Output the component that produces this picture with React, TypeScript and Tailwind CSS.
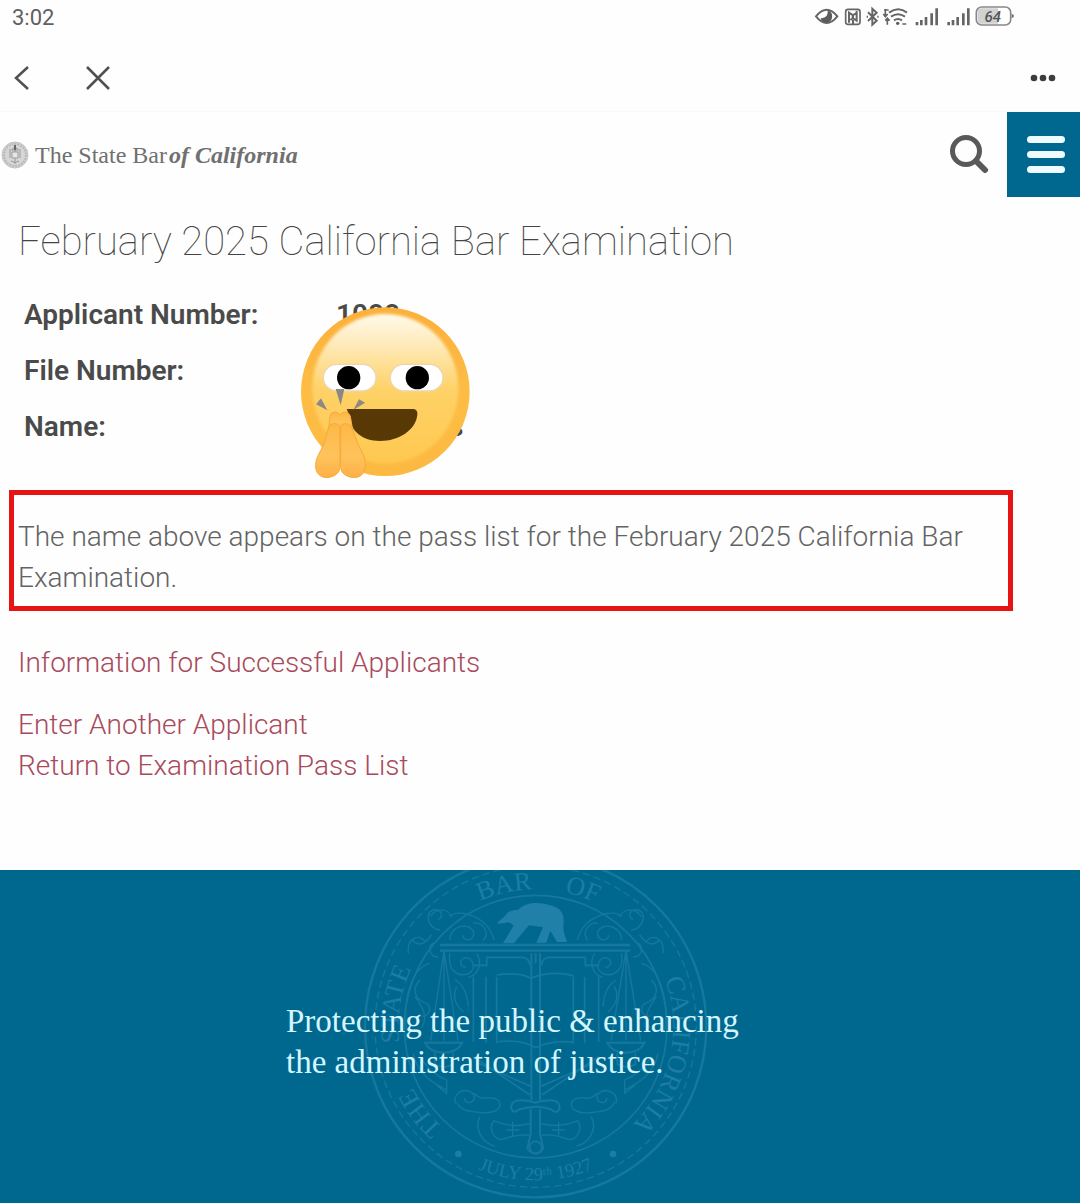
import React from "react";

const details = [
  { label: "Applicant Number:", value: "1088", className: "" },
  { label: "File Number:", value: "", className: "" },
  { label: "Name:", value: "s", className: "pl-[113px]" },
];

function StatusIcons() {
  return (
    <svg viewBox="102 12 603 78" className="w-[201px] h-[26px]" fill="none" stroke="#666" strokeWidth="6">
      {/* eye comfort */}
      <path d="M108 49q32-40 64 0q-32 40-64 0z" />
      <path d="M143 31a19 19 0 0 1-3 37c-12 0-17-6-18-13c12 0 23-6 21-24z" fill="#5c5c5c" stroke="none" />
      {/* nfc */}
      <rect x="197" y="28" width="43" height="45" rx="7" strokeWidth="5" />
      <path d="M207 68V38l12 8v8l-8 6M230 32v30l-12-8v-8l10-6M219 60v12" strokeWidth="6" />
      {/* bluetooth */}
      <path d="M264 37l26 25-13 12V26l13 12-26 25" strokeWidth="6" />
      <path d="M260 50h4M292 50h4" />
      {/* wifi */}
      <path d="M327 38q28-20 54 0M333 50q21-14 42 0M342 61q12-8 24 0" />
      <circle cx="353" cy="70" r="5" fill="#5c5c5c" stroke="none" />
      <path d="M312 30h14M316 27v20M310 42l6 8 7-8M322 74V56M316 62l6-7 7 7M367 72h12" strokeWidth="5" />
      {/* signal bars */}
      <path d="M411 76v-10M424 76V60M438 76V51M455 76V40M470 76V25" strokeWidth="8" />
      <path d="M506 76v-10M519 76V60M533 76V51M550 76V40M565 76V25" strokeWidth="8" />
      {/* battery */}
      <rect x="589" y="21" width="103" height="54" rx="16" strokeWidth="5" stroke="#888" fill="#fff" />
      <path d="M604 25h50v46h-50q-11 0-11-12V37q0-12 11-12z" fill="#d2d2d2" stroke="none" />
      <path d="M695 42q7 0 7 6t-7 6z" fill="#777" stroke="none" />
      <text x="638" y="65" textAnchor="middle" fontSize="45" fontWeight="500" fontStyle="italic" fontFamily="Roboto, sans-serif" fill="#555" stroke="none">
        64
      </text>
    </svg>
  );
}

function SmallSeal() {
  return (
    <svg viewBox="0 0 28 28" className="w-7 h-7" fill="none" stroke="#999">
      <circle cx="14" cy="14" r="13" fill="#d6d6d6" stroke="#c4c4c4" />
      <circle cx="14" cy="14" r="11" strokeDasharray="2 1" strokeWidth="2" stroke="#b8b8b8" />
      <path d="M14 5v18M8 9h12M9 10v7M19 10v7M10 20q4 3 8 0M11 8q3-3 6 0" />
      <path d="M11 11h6v6h-6z" fill="#e6e6e6" />
      <path d="M14 4v5" strokeWidth="2" stroke="#666" />
    </svg>
  );
}

function Emoji() {
  return (
    <svg viewBox="0 0 630 600" className="w-[210px] h-[200px]">
      <defs>
        <linearGradient id="face" x1="0" y1="0" x2="0" y2="1">
          <stop offset="0" stopColor="#fbb03a" />
          <stop offset="0.5" stopColor="#fdbd45" />
          <stop offset="1" stopColor="#fcb941" />
        </linearGradient>
        <linearGradient id="shine" x1="0" y1="0" x2="0" y2="1">
          <stop offset="0" stopColor="#fffae9" />
          <stop offset="0.2" stopColor="#feeabb" />
          <stop offset="0.5" stopColor="#fed268" />
          <stop offset="1" stopColor="#fec84f" />
        </linearGradient>
        <linearGradient id="hand" x1="0" y1="0" x2="0" y2="1">
          <stop offset="0" stopColor="#fdb844" />
          <stop offset="0.6" stopColor="#ffc35c" />
          <stop offset="1" stopColor="#fdb045" />
        </linearGradient>
        <filter id="soft" x="-10%" y="-10%" width="120%" height="120%">
          <feGaussianBlur stdDeviation="5" />
        </filter>
      </defs>
      <circle cx="316" cy="305" r="253" fill="url(#face)" />
      <ellipse cx="316" cy="296" rx="219" ry="224" fill="url(#shine)" filter="url(#soft)" />
      <rect x="130" y="223" width="158" height="80" rx="40" fill="#fff" stroke="#eed5ae" strokeWidth="4" />
      <rect x="331" y="223" width="158" height="80" rx="40" fill="#fff" stroke="#eed5ae" strokeWidth="4" />
      <circle cx="206" cy="263" r="35" />
      <circle cx="412" cy="263" r="35" />
      <path d="M200 357H400q14 2 12 18c-5 45-55 78-112 78c-52 0-92-30-88-74q-8-10-12-22z" fill="#583906" />
      <path d="M167 297h26l-11 49zM108 343l15-18 19 36zM255 338l-18-10-17 32z" fill="#8c8984" />
      <g fill="url(#hand)" stroke="#f5a93a" strokeWidth="3" strokeLinejoin="round">
        <path d="M146 420L150 380Q152 367 164 366Q176 366 180 376Q186 364 198 366Q210 369 212 384L218 420Z" />
        <path d="M180 410C172 396 150 398 145 414C137 440 136 458 124 478C112 500 106 512 107 530C108 556 130 567 152 561C172 555 179 545 180 530Z" />
        <path d="M182 410C190 396 209 399 216 414C226 436 230 458 242 478C252 497 257 512 256 530C254 556 234 567 210 561C190 555 183 545 182 530Z" />
      </g>
    </svg>
  );
}

function FooterSeal() {
  return (
    <svg viewBox="15 30 1170 999" className="w-[390px] h-[333px]" fill="none" stroke="#17789e" strokeWidth="5">
      <defs>
        <path id="ring" d="M587 912A412 412 0 1 1 588 912" />
        <path id="ringBottom" d="M287 850A461 461 0 0 0 887 850" />
      </defs>
      <circle cx="587" cy="500" r="512" strokeWidth="7" />
      <circle cx="587" cy="500" r="482" strokeDasharray="22 12" strokeWidth="4" />
      <circle cx="587" cy="500" r="394" />
      <g fill="#1d7da3" stroke="none" fontSize="78" textAnchor="middle" fontFamily="'Liberation Serif', serif">
        <text>
          <textPath href="#ring" startOffset="382">THE</textPath>
        </text>
        <text>
          <textPath href="#ring" startOffset="712">STATE</textPath>
        </text>
        <text>
          <textPath href="#ring" startOffset="1202">BAR</textPath>
        </text>
        <text>
          <textPath href="#ring" startOffset="1430">OF</textPath>
        </text>
        <text>
          <textPath href="#ring" startOffset="2031">CALIFORNIA</textPath>
        </text>
        <text fontSize="56">
          <textPath href="#ringBottom" startOffset="50%">JULY 29ᵗʰ 1927</textPath>
        </text>
        <circle cx="355" cy="882" r="10" />
        <circle cx="819" cy="882" r="10" />
      </g>
      {/* bear */}
      <path
        d="M470 190l25-22c8-14 24-20 38-18c28-26 68-24 96-14c32 6 44 24 42 52c-4 26 4 38 10 58h-30l-20-34-12 36h-30l20-46-42-6-46 54h-32l32-54-16-10q-18 6-35 4z"
        fill="#2080a7"
        stroke="none"
      />
      {/* scales beam and columns */}
      <path d="M300 255H870M300 272H870" strokeWidth="7" />
      <path d="M440 292h104q24 0 26 24M736 292H630q-24 0-26 24M440 292v24h-40M736 292v24h40M400 350v196M438 350v200M470 350v200M776 350v196M734 350v200M700 350v200" />
      <path d="M470 345q70-10 102 10q60-25 128-8M475 545q70-8 112 18q50-24 115-16M415 610l160 70M760 610l-160 70M400 590l170 115M776 590l-170 115" />
      <path d="M574 280v440M600 280v440M587 280v30" strokeWidth="6" />
      <path d="M312 272l-40 270M312 272l42 270M312 272v270M858 272l-45 270M858 272l44 270M858 272v270" strokeWidth="4" />
      <path d="M255 548h112q-14 30-56 30t-56-30zM802 548h112q-14 30-56 30t-56-30z" strokeWidth="6" />
      <path d="M285 578v34q30 18 54 0v-34M832 578v34q30 18 54 0v-34" />
      {/* scrollwork */}
      {["", "translate(1174 0) scale(-1 1)"].map((t) => (
        <g key={t} transform={t || undefined} strokeWidth="4">
          <path d="M300 210c-34-4-50-50-20-60c24-6 34 24 14 28M270 170c20-30 60-22 62 0c10-24 110-10 130 70M330 240c-4-40 56-56 70-26c8 28-30 34-32 12M400 190c30-6 50 30 30 52" />
          <path d="M330 280c-10 50 24 74 56 60c26-16 12-52-14-46c-18 8-8 32 6 26M410 280c16 24 10 62-24 72M205 280c-6-44 30-60 50-36M215 240q30 30 60-16M285 250c-24-2-20 46 10 40" />
          <path d="M270 310c-50 10-84 100-70 200M240 360c-30 30-10 60 18 70c20 12 10 40-14 38M225 410c24 34 40 60 20 94M345 360q36 20 40 80M350 380q-20 40 20 76M220 580c10 60 60 90 100 110M240 590q30 50 80 70v40l-30-24" />
          <path d="M346 730c-10-40 44-50 56-24c8 24-30 30-28 8M402 700c30 30 50 0 74 22c16 26-20 40-50 36c-40-4-60-4-76-30M420 770c-20 40 10 80 44 88M460 782q60 24 110 8M462 782c-20 26 4 60 26 56q50-18 80-12M500 810h38M518 786v42" />
        </g>
      ))}
      {/* sword hilt */}
      <path d="M514 748c-6-34 34-30 72-20c40-10 78-14 72 20q-10 16-24 0q-40-16-96 0q-16 14-24 0zM572 748v74l-10 44q24 30 48 0l-10-44v-74" strokeWidth="6" />
      <circle cx="587" cy="862" r="18" />
    </svg>
  );
}

export default function App() {
  return (
    <div className="min-h-screen flex flex-col bg-[#fefefe] font-[Roboto,sans-serif] text-[#4a4a4a]">
      <div className="flex items-center justify-between h-[34px] pl-3 pr-[65px]">
        <span className="text-[22px] text-[#606060]">3:02</span>
        <StatusIcons />
      </div>

      <nav className="flex items-center justify-between h-[78px] pt-2.5 pl-2.5 pr-6 border-b border-[#f8f8f8]">
        <div className="flex gap-12">
          <button aria-label="Back">
            <svg viewBox="0 0 26 32" className="w-[26px] h-8" fill="none" stroke="#505050" strokeWidth="2.5">
              <path d="M18 5L6 16L18 27" />
            </svg>
          </button>
          <button aria-label="Close">
            <svg viewBox="0 0 28 32" className="w-7 h-8" fill="none" stroke="#505050" strokeWidth="2.5">
              <path d="M3 5L25 27M25 5L3 27" />
            </svg>
          </button>
        </div>
        <button aria-label="More">
          <svg viewBox="0 0 26 26" className="w-[26px] h-[26px]" fill="#3c3c3c">
            <circle cx="4" cy="13" r="3.300" />
            <circle cx="13" cy="13" r="3.300" />
            <circle cx="22" cy="13" r="3.300" />
          </svg>
        </button>
      </nav>

      <header className="flex items-center justify-between h-[85px]">
        <a href="#" className="flex items-center gap-1.5 pl-px font-['Liberation_Serif',serif] text-2xl text-[#707070]">
          <SmallSeal />
          <span className="flex gap-0.5">
            <span>The State Bar</span>
            <em className="font-bold">of California</em>
          </span>
        </a>
        <div className="flex items-center h-full gap-[18px]">
          <button aria-label="Search">
            <svg viewBox="0 0 40 40" className="w-10 h-10" fill="none" stroke="#585a5a" strokeWidth="5">
              <circle cx="17" cy="16" r="13.500" />
              <path d="M27 26l9 9" strokeWidth="6" strokeLinecap="round" />
            </svg>
          </button>
          <button aria-label="Menu" className="flex flex-col items-center justify-center gap-2 w-[73px] h-full pl-1 bg-[#00688f]">
            <span className="w-[38px] h-[7px] rounded-full bg-[#eefcff]" />
            <span className="w-[38px] h-[7px] rounded-full bg-[#eefcff]" />
            <span className="w-[38px] h-[7px] rounded-full bg-[#eefcff]" />
          </button>
        </div>
      </header>

      <main className="pb-[84px]">
        <h1 className="px-[18px] pt-5 text-[40px] leading-[50px] font-thin text-[#444]">
          February 2025 California Bar Examination
        </h1>

        <div className="relative mt-5 px-6">
          <dl className="text-[28px] font-semibold text-[#4a4a4a]">
            {details.map((item) => (
              <div key={item.label} className="flex items-center h-14">
                <dt className="w-[312px]">{item.label}</dt>
                <dd className={item.className}>{item.value}</dd>
              </div>
            ))}
          </dl>
          <div className="absolute left-[280px] top-[3px]">
            <Emoji />
          </div>
        </div>

        <p className="mt-[35px] ml-[9px] mr-[67px] pl-1 pt-[21px] pb-2 border-[5px] border-[#e81313] text-[28px] leading-[41px] font-light text-[#636363]">
          The name above appears on the pass list for the February 2025 California Bar Examination.
        </p>

        <div className="flex flex-col items-start px-[18px] pt-[31px] text-[28px] leading-[41px] font-light text-[#a94a5c]">
          <a href="#" className="mb-[21px]">Information for Successful Applicants</a>
          <a href="#">Enter Another Applicant</a>
          <a href="#">Return to Examination Pass List</a>
        </div>
      </main>

      <footer className="relative flex-1 min-h-[333px] overflow-hidden bg-[#00688f]">
        <div className="absolute inset-x-0 top-0 flex justify-center">
          <FooterSeal />
        </div>
        <p className="relative w-[508px] mx-auto pt-[131px] font-['Liberation_Serif',serif] text-[33px] leading-[41px] text-[#d3f6ff]">
          Protecting the public & enhancing
          <br />
          the administration of justice.
        </p>
      </footer>
    </div>
  );
}
